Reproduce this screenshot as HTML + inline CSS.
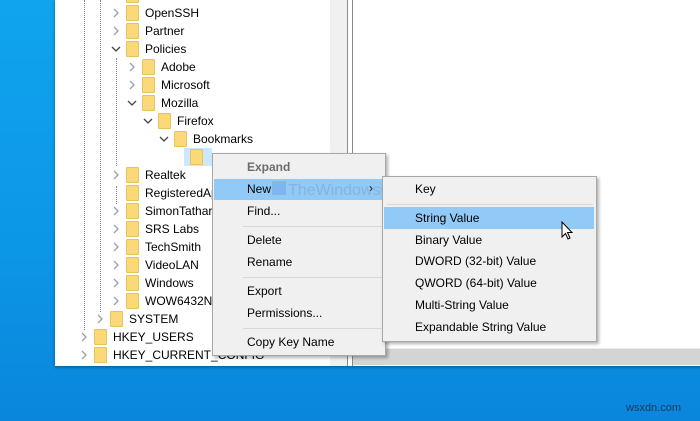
<!DOCTYPE html>
<html><head><meta charset="utf-8"><style>
*{margin:0;padding:0;box-sizing:border-box}
body{width:700px;height:421px;overflow:hidden;position:relative;font-family:"Liberation Sans",sans-serif;font-size:12px;color:#000;background:linear-gradient(180deg,#10a4ee 0%,#0c96e6 60%,#0a86dc 100%)}
.win{position:absolute;left:55px;top:0;width:650px;height:366px;background:#fff;box-shadow:0 1px 3px rgba(0,0,0,.4);overflow:hidden}
.sb{position:absolute;left:275px;top:0;width:17px;height:366px;background:#f0f0f0}
.l1{position:absolute;left:292px;top:0;width:1px;height:366px;background:#8a8a8a}
.l2{position:absolute;left:297px;top:0;width:1px;height:366px;background:#8a8a8a}
.hs{position:absolute;left:298px;top:348px;width:352px;height:17px;background:#d4d4d4;border-top:1px solid #ececec}
.r{position:absolute;height:18px;line-height:18px;white-space:nowrap}
.f{position:absolute;width:13px;height:16px;background:#f9d978;border:1px solid #e8c45a;border-radius:1px}
.dl{position:absolute;border-left:1px dotted #888;width:0}
.m{position:absolute;background:#f0f0f0;border:1px solid #a8a8a8;box-shadow:2px 2px 3px rgba(0,0,0,.3)}
.i{position:absolute;height:21px;line-height:21px;white-space:nowrap}
.hl{position:absolute;background:#91c9f7}
.sep{position:absolute;height:1px;background:#d7d7d7}
</style></head><body>
<div class="win">
<div class="dl" style="left:29px;top:0;height:330px"></div>
<div class="dl" style="left:45px;top:0;height:312px"></div>
<div class="dl" style="left:61px;top:58px;height:108px"></div>
<div class="dl" style="left:61px;top:186px;height:18px"></div>
<div style="position:absolute;left:129px;top:148px;width:28px;height:18px;background:#cce8ff"></div>
<div id="t"></div>
<div class="f" style="left:135px;top:149px"></div>
<div class="sb"></div><div class="l1"></div><div class="l2"></div><div class="hs"></div>
</div>

<div class="m" style="left:212px;top:153px;width:174px;height:203px">
<div class="hl" style="left:1px;top:25px;width:170px;height:21px"></div>
<div class="i" style="left:34px;top:3px;color:#6d6d6d;font-weight:bold">Expand</div>
<div class="i" style="left:34px;top:25px">New</div><div class="i" style="left:156px;top:24px">›</div>
<div class="i" style="left:34px;top:47px">Find...</div>
<div class="sep" style="left:30px;top:72px;width:140px"></div>
<div class="i" style="left:34px;top:76px">Delete</div>
<div class="i" style="left:34px;top:98px">Rename</div>
<div class="sep" style="left:30px;top:123px;width:140px"></div>
<div class="i" style="left:34px;top:127px">Export</div>
<div class="i" style="left:34px;top:149px">Permissions...</div>
<div class="sep" style="left:30px;top:174px;width:140px"></div>
<div class="i" style="left:34px;top:178px">Copy Key Name</div>
</div>
<div style="position:absolute;left:272px;top:181px;color:rgba(120,140,170,.35);font-size:16px"><span style="display:inline-block;width:14px;height:14px;background:rgba(90,150,220,.35);margin-right:2px"></span>TheWindowsClub</div>

<div class="m" style="left:382px;top:176px;width:215px;height:166px">
<div class="hl" style="left:1px;top:30px;width:210px;height:22px"></div>
<div class="i" style="left:32px;top:2px">Key</div>
<div class="sep" style="left:4px;top:27px;width:206px"></div>
<div class="i" style="left:32px;top:31px">String Value</div>
<div class="i" style="left:32px;top:53px">Binary Value</div>
<div class="i" style="left:32px;top:74px">DWORD (32-bit) Value</div>
<div class="i" style="left:32px;top:96px">QWORD (64-bit) Value</div>
<div class="i" style="left:32px;top:118px">Multi-String Value</div>
<div class="i" style="left:32px;top:140px">Expandable String Value</div>
</div>
<svg style="position:absolute;left:561px;top:221px" width="14" height="20" viewBox="0 0 14 20"><path d="M1 1 L1 16 L4.5 12.5 L7 18 L9 17 L6.5 11.5 L11 11.5 Z" fill="#fff" stroke="#000" stroke-width="1"/></svg>
<div style="position:absolute;left:626px;top:402px;color:#1d3a5a;font-size:11px">wsxdn.com</div>
<script>
var rows=[["",3,">"],["OpenSSH",3,">"],["Partner",3,">"],["Policies",3,"v"],["Adobe",4,">"],["Microsoft",4,">"],["Mozilla",4,"v"],["Firefox",5,"v"],["Bookmarks",6,"v"],[null],["Realtek",3,">"],["RegisteredAp",3,""],["SimonTathar",3,">"],["SRS Labs",3,">"],["TechSmith",3,">"],["VideoLAN",3,">"],["Windows",3,">"],["WOW6432Nc",3,">"],["SYSTEM",2,">"],["HKEY_USERS",1,">"],["HKEY_CURRENT_CONFIG",1,">"]];
var h="";for(var k=0;k<rows.length;k++){var r=rows[k];if(!r[0]&&r[0]!=="")continue;var y=k*18-14;var lv=r[1];var cx=29+(lv-1)*16-4,fx=39+(lv-1)*16,tx=58+(lv-1)*16;
if(r[2]===">")h+='<svg style="position:absolute;left:'+cx+'px;top:'+(y+4)+'px" width="8" height="10"><path d="M2 1 L6 5 L2 9" fill="none" stroke="#a0a0a0" stroke-width="1.3"/></svg>';
if(r[2]==="v")h+='<svg style="position:absolute;left:'+(cx-1)+'px;top:'+(y+6)+'px" width="10" height="6"><path d="M1 1 L5 5 L9 1" fill="none" stroke="#444" stroke-width="1.3"/></svg>';
h+='<div class="f" style="left:'+fx+'px;top:'+(y+1)+'px"></div><div class="r" style="left:'+tx+'px;top:'+y+'px">'+r[0]+'</div>';}
document.getElementById("t").innerHTML=h;
</script>
</body></html>
